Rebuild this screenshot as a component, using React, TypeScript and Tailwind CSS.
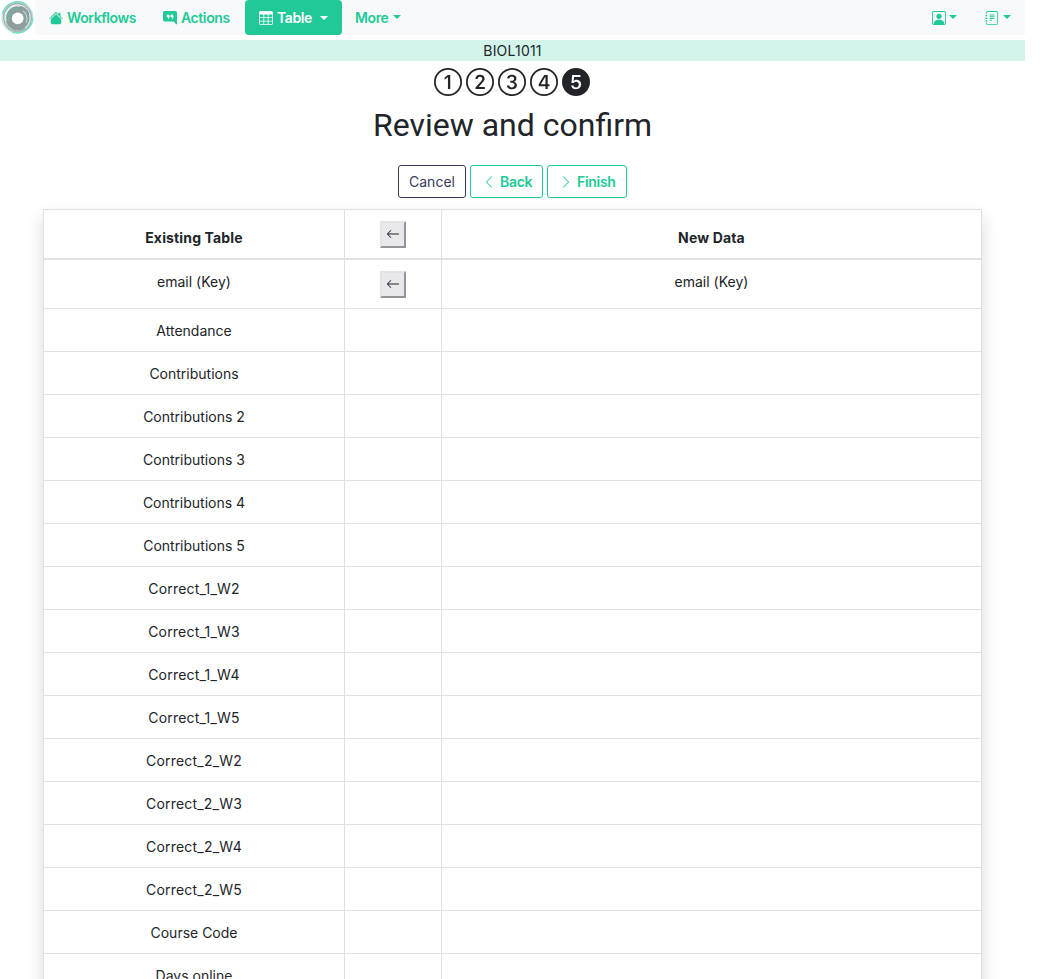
import type { ReactNode } from 'react';
import {
  Bs1Circle,
  Bs2Circle,
  Bs3Circle,
  Bs4Circle,
  Bs5CircleFill,
  BsArrowLeft,
  BsChatRightQuoteFill,
  BsChevronLeft,
  BsChevronRight,
  BsHouseFill,
  BsJournalText,
  BsPersonSquare,
  BsTable,
} from 'react-icons/bs';

const columns = [
  'Attendance',
  'Contributions',
  'Contributions 2',
  'Contributions 3',
  'Contributions 4',
  'Contributions 5',
  'Correct_1_W2',
  'Correct_1_W3',
  'Correct_1_W4',
  'Correct_1_W5',
  'Correct_2_W2',
  'Correct_2_W3',
  'Correct_2_W4',
  'Correct_2_W5',
  'Course Code',
  'Days online',
];

function Caret({ className = '' }: { className?: string }) {
  return (
    <span
      className={`inline-block h-0 w-0 border-x-4 border-t-4 border-x-transparent border-t-current ${className}`}
    />
  );
}

function Logo() {
  return (
    <svg viewBox="0 0 35 35" className="h-[35px] w-[35px] shrink-0" fill="none">
      <circle cx="17.4" cy="17.4" r="15.4" stroke="#b5e6dd" strokeWidth="1.2" />
      <circle cx="17.5" cy="17.5" r="13.8" stroke="#a9b6b5" strokeWidth="1.8" />
      <circle cx="17.8" cy="18" r="12.4" fill="#8f9d9c" />
      <path d="M2.5 14A15.5 15.5 0 0 1 27 5M32.8 18A15.5 15.5 0 0 1 12 32" stroke="#6fdcc6" strokeWidth="1.3" />
      <path d="M6 21A12 12 0 0 1 20 6" stroke="#d8f5ef" strokeWidth="1.3" />
      <path d="M29.5 14A12.5 12.5 0 0 1 25 28" stroke="#c8eee7" strokeWidth="1.2" />
      <path d="M9 22A10 10 0 0 1 19 8.4" stroke="#5fbfae" strokeWidth="1.3" />
      <path d="M23 11A9.5 9.5 0 0 1 26 23" stroke="#b3dfd8" strokeWidth="1.1" />
      <circle cx="17.7" cy="18.3" r="5.9" fill="#fff" />
    </svg>
  );
}

function MoveButton() {
  return (
    <button className="flex h-[27px] w-[26px] items-center justify-center border-2 border-t-[#e3e3e3] border-r-[#949494] border-b-[#949494] border-l-[#e3e3e3] bg-[#e9e9ed] pb-[2px] text-[#212529]">
      <BsArrowLeft size={14} />
    </button>
  );
}

function Row({ rowClass, left, middle, right }: { rowClass: string; left: string; middle?: ReactNode; right?: string }) {
  return (
    <div className={`grid grid-cols-[301px_97px_1fr] divide-x divide-[#dee2e6] border-[#dee2e6] text-center ${rowClass}`}>
      <div>{left}</div>
      <div className="flex justify-center">{middle}</div>
      <div>{right}</div>
    </div>
  );
}

export default function App() {
  return (
    <div className="h-[979px] w-[1040px] overflow-hidden bg-white font-['Inter','Liberation_Sans',sans-serif] text-[14px] leading-[21px] text-[#212529]">
      <div className="w-[1025px]">
        <nav className="flex h-[35px] bg-[#f8f9fa] font-semibold tracking-[-0.4px] text-[#20c997]">
          <div className="bg-white">
            <Logo />
          </div>
          <a className="ml-[14px] flex items-center gap-[4px]">
            <BsHouseFill size={14} />
            <span className="w-[69px] whitespace-nowrap">Workflows</span>
          </a>
          <a className="ml-[27px] flex items-center gap-[4px]">
            <BsChatRightQuoteFill size={14} />
            <span className="w-[50px]">Actions</span>
          </a>
          <a className="ml-[14px] flex w-[97px] items-center rounded-[4px] bg-[#20c997] pl-[14px] text-white">
            <BsTable size={14} />
            <span className="ml-[4px] w-[35px]">Table</span>
            <Caret className="ml-[8px]" />
          </a>
          <a className="ml-[13px] flex items-center">
            <span className="w-[35px]">More</span>
            <Caret className="mb-[2px] ml-[3px]" />
          </a>
          <div className="ml-auto flex items-center pr-[14px]">
            <BsPersonSquare size={14} />
            <Caret className="mb-[2px] ml-[3px]" />
            <BsJournalText size={14} className="ml-[28px]" />
            <Caret className="mb-[2px] ml-[4px]" />
          </div>
        </nav>
        <div className="mt-[5px] h-[21px] bg-[#d2f4ea] text-center tracking-[0.2px]">BIOL1011</div>
        <div className="mt-[7px] flex justify-center gap-[4px] pr-px">
          <Bs1Circle size={28} />
          <Bs2Circle size={28} />
          <Bs3Circle size={28} />
          <Bs4Circle size={28} />
          <Bs5CircleFill size={28} />
        </div>
        <h1 className="mt-[8px] text-center font-['Roboto',sans-serif] text-[32px] font-[450] leading-[42px]">
          Review and confirm
        </h1>
        <div className="mt-[19px] flex justify-center gap-[4px]">
          <button className="h-[33px] w-[68px] rounded-[3px] border border-[#3a3b59] text-[#3a3b59] shadow-xs">Cancel</button>
          <button className="flex h-[33px] w-[73px] items-center rounded-[3px] border border-[#20c997] pl-[11px] font-semibold tracking-[-0.3px] text-[#20c997] shadow-xs">
            <BsChevronLeft size={14} />
            <span className="ml-[4px]">Back</span>
          </button>
          <button className="flex h-[33px] w-[80px] items-center rounded-[3px] border border-[#20c997] pl-[11px] font-semibold tracking-[-0.3px] text-[#20c997] shadow-xs">
            <BsChevronRight size={14} />
            <span className="ml-[4px]">Finish</span>
          </button>
        </div>
        <div className="mx-[43px] mt-[11px] border border-[#dee2e6] shadow-[0_8px_16px_rgba(0,0,0,0.15)]">
          <Row
            rowClass="h-[50px] border-b-2 font-bold tracking-[0.15px] *:first:pt-[17px] *:last:pt-[17px] *:nth-2:pt-[11px]"
            left="Existing Table"
            middle={<MoveButton />}
            right="New Data"
          />
          <Row
            rowClass="h-[49px] border-b *:first:pt-[11px] *:last:pt-[11px] *:nth-2:pt-[11px]"
            left="email (Key)"
            middle={<MoveButton />}
            right="email (Key)"
          />
          {columns.map((name) => (
            <Row
              key={name}
              rowClass={`h-[43px] border-b *:first:pt-[11px] ${name.includes('_') ? 'tracking-[0.2px]' : ''}`}
              left={name}
            />
          ))}
        </div>
      </div>
    </div>
  );
}
